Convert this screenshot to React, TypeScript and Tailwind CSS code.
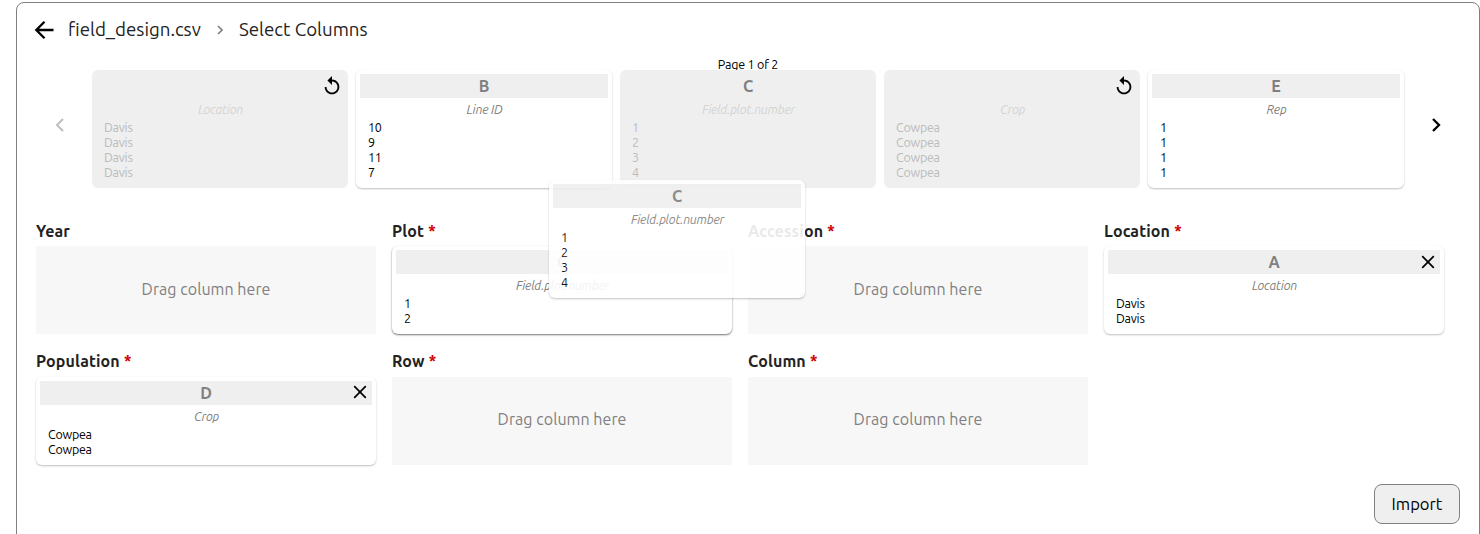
import React from "react";

type CardProps = {
  letter?: string;
  name: string;
  rows: string[];
  used?: boolean;
  dragged?: boolean;
  action?: "reset" | "remove";
};

function ResetIcon() {
  return (
    <svg viewBox="0 0 24 24" className="size-[22px]" fill="currentColor">
      <path d="M12 5V1L7 6l5 5V7c3.31 0 6 2.69 6 6s-2.69 6-6 6-6-2.69-6-6H4c0 4.42 3.58 8 8 8s8-3.58 8-8-3.58-8-8-8z" />
    </svg>
  );
}

function CloseIcon() {
  return (
    <svg viewBox="0 0 14 14" className="size-[14px]" fill="none" stroke="currentColor" strokeWidth="1.7">
      <path d="M1.2 1.2 12.8 12.8M12.8 1.2 1.2 12.8" />
    </svg>
  );
}

function ColumnCard({ letter, name, rows, used, dragged, action }: CardProps) {
  const surface = used
    ? "bg-[#efefef]"
    : dragged
      ? "bg-white shadow-[0_1px_2px_rgba(0,0,0,0.55)]"
      : "bg-white shadow-[0_1px_2px_rgba(0,0,0,0.26)]";
  return (
    <div className={`relative h-full rounded-md p-1 ${surface}`}>
      <div className="h-6 bg-[#efefef] text-center text-base font-bold leading-6 text-[#808080]">
        {letter}
      </div>
      <div className={`mt-1 pl-px text-center text-[12.5px] italic leading-[15px] tracking-[-0.2px] ${used ? "text-[#d4d4d4]" : "text-[#808080]"}`}>
        {name}
      </div>
      <div className={`mt-[3px] px-2 text-[12.5px] leading-[15px] tracking-[-0.25px] ${used ? "text-[#bbbbbb]" : "text-black"}`}>
        {rows.map((r, i) => (
          <div key={i}>{r}</div>
        ))}
      </div>
      {action === "reset" && (
        <button className="absolute top-[5.4px] right-[4.6px] text-black" aria-label="Reset">
          <ResetIcon />
        </button>
      )}
      {action === "remove" && (
        <button className="absolute top-[8.6px] right-[9.4px] text-black" aria-label="Remove">
          <CloseIcon />
        </button>
      )}
    </div>
  );
}

function Field({ label, required, children }: { label: string; required?: boolean; children?: React.ReactNode }) {
  return (
    <div>
      <div className="h-[26.4px] text-base font-bold leading-[22px] tracking-[0.13px] text-[#222]">
        {label}
        {required && <span className="text-[#cc0000]"> *</span>}
      </div>
      <div className="h-[88px]">
        {children ?? (
          <div className="flex h-full items-center justify-center bg-[#f7f7f7] pb-[3px] text-base tracking-[0.05px] text-[#808080]">
            Drag column here
          </div>
        )}
      </div>
    </div>
  );
}

export default function App() {
  return (
    <div className="h-[534px] overflow-hidden bg-white pt-0.5 pl-4 font-['Ubuntu','Noto_Sans',sans-serif]">
      <div className="relative h-[560px] rounded-lg border border-[#808080]">
        <header className="flex h-[54px] items-center pl-[17px] text-[18.72px] leading-6 text-[#222]">
          <svg viewBox="0 0 20 20" className="size-5 text-black" fill="none" stroke="currentColor" strokeWidth="2.3">
            <path d="M19.5 10H2M10.5 1.8 2.3 10l8.2 8.2" />
          </svg>
          <span className="ml-[14px] w-[133px] whitespace-nowrap">field_design.csv</span>
          <svg viewBox="0 0 6 10" className="ml-4 h-[10px] w-[6px] text-[#808080]" fill="none" stroke="currentColor" strokeWidth="1.6">
            <path d="M1 1 5 5 1 9" />
          </svg>
          <span className="ml-4 whitespace-nowrap">Select Columns</span>
        </header>

        <div className="h-[13px] text-center text-[12.5px] leading-[14px] tracking-[-0.2px] text-black">Page 1 of 2</div>

        <div className="flex h-[118px]">
          <button className="flex w-[75px] items-center justify-center pb-2 pl-[10px] text-[#bfbfbf]" aria-label="Previous">
            <svg viewBox="0 0 10 14" className="h-[14px] w-[10px]" fill="none" stroke="currentColor" strokeWidth="2">
              <path d="M8 1 2 7l6 6" />
            </svg>
          </button>
          <div className="grid w-[1312px] grid-cols-5 gap-2">
            <ColumnCard name="Location" rows={["Davis", "Davis", "Davis", "Davis"]} used action="reset" />
            <ColumnCard letter="B" name="Line ID" rows={["10", "9", "11", "7"]} />
            <ColumnCard letter="C" name="Field.plot.number" rows={["1", "2", "3", "4"]} used />
            <ColumnCard name="Crop" rows={["Cowpea", "Cowpea", "Cowpea", "Cowpea"]} used action="reset" />
            <ColumnCard letter="E" name="Rep" rows={["1", "1", "1", "1"]} />
          </div>
          <button className="flex flex-1 items-center justify-center pr-[11px] pb-2 text-black" aria-label="Next">
            <svg viewBox="0 0 10 14" className="h-[14px] w-[10px]" fill="none" stroke="currentColor" strokeWidth="2.3">
              <path d="m2 1 6 6-6 6" />
            </svg>
          </button>
        </div>

        <div className="mt-8 ml-[19px] grid w-[1408px] grid-cols-4 gap-4">
          <Field label="Year" />
          <Field label="Plot" required>
            <ColumnCard letter="C" name="Field.plot.number" rows={["1", "2"]} dragged />
          </Field>
          <Field label="Accession" required />
          <Field label="Location" required>
            <ColumnCard letter="A" name="Location" rows={["Davis", "Davis"]} action="remove" />
          </Field>
          <Field label="Population" required>
            <ColumnCard letter="D" name="Crop" rows={["Cowpea", "Cowpea"]} action="remove" />
          </Field>
          <Field label="Row" required />
          <Field label="Column" required />
        </div>

        <div className="mt-[19.2px] flex justify-end pr-[19px]">
          <button className="h-10 w-[86px] rounded-lg border border-[#808080] bg-[#efefef] text-[16.6px] text-black">
            Import
          </button>
        </div>

        <div className="absolute top-[177px] left-[532px] h-[118px] w-64 opacity-90">
          <ColumnCard letter="C" name="Field.plot.number" rows={["1", "2", "3", "4"]} />
        </div>
      </div>
    </div>
  );
}
